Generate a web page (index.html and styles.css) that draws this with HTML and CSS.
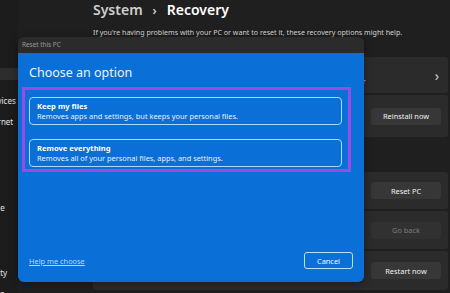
FILE: index.html
```html
<!DOCTYPE html>
<html lang="en">
<head>
    <meta charset="UTF-8">
    <meta name="viewport" content="width=device-width, initial-scale=1.0">
    <title>Recovery</title>
    <link rel="stylesheet" href="styles.css">
</head>
<body>
    <div class="window">
        <!-- 左側選單，只露出一小截 -->
        <aside class="sidebar">
            <ul class="nav">
                <li class="nav-item active">System</li>
                <li class="nav-item">Bluetooth &amp; devices</li>
                <li class="nav-item">Network &amp; internet</li>
                <li class="nav-item">Personalization</li>
                <li class="nav-item">Apps</li>
                <li class="nav-item">Accounts</li>
                <li class="nav-item">Time &amp; language</li>
                <li class="nav-item">Gaming</li>
                <li class="nav-item">Accessibility</li>
                <li class="nav-item">Privacy &amp; security</li>
                <li class="nav-item">Windows Update</li>
            </ul>
        </aside>

        <main class="content">
            <header class="crumb">
                <span class="crumb-parent">System</span>
                <span class="crumb-sep">&rsaquo;</span>
                <span class="crumb-current">Recovery</span>
            </header>
            <p class="intro">If you're having problems with your PC or want to reset it, these recovery options might help.</p>

            <div class="card card-fix">
                <div class="card-text">
                    <div class="card-title">Fix problems without resetting your PC</div>
                    <div class="card-desc">Resetting can take a while &mdash; first, try resolving issues by running a troubleshooter</div>
                </div>
                <span class="chevron">&rsaquo;</span>
            </div>
            <div class="card card-update">
                <div class="card-text">
                    <div class="card-title">Fix problems using Windows Update</div>
                </div>
                <button class="btn">Reinstall now</button>
            </div>

            <h3 class="section">Recovery options</h3>

            <div class="card card-reset">
                <div class="card-text">
                    <div class="card-title">Reset this PC</div>
                </div>
                <button class="btn">Reset PC</button>
            </div>
            <div class="card card-back">
                <div class="card-text">
                    <div class="card-title">Go back</div>
                </div>
                <button class="btn btn-disabled">Go back</button>
            </div>
            <div class="card card-startup">
                <div class="card-text">
                    <div class="card-title">Advanced startup</div>
                </div>
                <button class="btn">Restart now</button>
            </div>
        </main>

        <!-- 重設對話框 -->
        <div class="dialog">
            <div class="dialog-titlebar">Reset this PC</div>
            <div class="dialog-body">
                <h2 class="dialog-heading">Choose an option</h2>
                <div class="highlight">
                    <button class="option">
                        <span class="option-title">Keep my files</span>
                        <span class="option-desc">Removes apps and settings, but keeps your personal files.</span>
                    </button>
                    <button class="option">
                        <span class="option-title">Remove everything</span>
                        <span class="option-desc">Removes all of your personal files, apps, and settings.</span>
                    </button>
                </div>
                <div class="dialog-footer">
                    <a class="help-link" href="#">Help me choose</a>
                    <button class="btn-cancel">Cancel</button>
                </div>
            </div>
        </div>
    </div>
</body>
</html>
```

FILE: styles.css
```css
body {
    margin: 0;
    background-color: #1c1c1c;
    font-family: "Noto Sans", "Open Sans", sans-serif;
    color: #fff;
}

.window {
    position: relative;
    display: flex;
    width: 450px;
    height: 293px;
    overflow: hidden;
    background-color: #1f1f1f;
}

/* 左側選單 */
.sidebar {
    width: 18px;
    flex-shrink: 0;
    overflow: hidden;
    padding-top: 68px;
    background-color: #1c1c1c;
}

.nav {
    list-style: none;
    margin: 0 0 0 -63px;
    padding: 0;
    width: 160px;
}

.nav-item {
    height: 21.5px;
    line-height: 21.5px;
    font-size: 8px;
    color: #e2e2e2;
    white-space: nowrap;
    padding-left: 4px;
}

.nav-item.active {
    height: 12px;
    line-height: 12px;
    margin-bottom: 9.5px;
    background-color: #2d2d2d;
    color: transparent;
}

/* 主要內容 */
.content {
    flex: 1;
    min-width: 0;
    padding: 0 2px 0 75px;
    display: flex;
    flex-direction: column;
}

.crumb {
    display: flex;
    align-items: baseline;
    gap: 10px;
    height: 25px;
    font-size: 14px;
    font-weight: 600;
    white-space: nowrap;
}

.crumb-parent {
    color: #cfcfcf;
}

.crumb-sep {
    font-size: 12px;
    color: #cfcfcf;
}

.crumb-current {
    color: #fff;
}

.intro {
    margin: 2px 0 0;
    height: 30px;
    font-size: 7.1px;
    color: #d4d4d4;
    white-space: nowrap;
}

.card {
    display: flex;
    align-items: center;
    justify-content: space-between;
    background-color: #2b2b2b;
    border-radius: 3px;
    padding: 0 7px 0 12px;
    margin-bottom: 2px;
}

.card-fix { height: 36px; }
.card-update { height: 42px; }
.card-reset { height: 37px; }
.card-back { height: 38px; }
.card-startup { height: 39px; }

.card-text {
    min-width: 0;
    white-space: nowrap;
}

.card-title {
    font-size: 8px;
    color: #fff;
}

.card-desc {
    font-size: 6.75px;
    color: #cfcfcf;
    margin-top: 1px;
}

.chevron {
    font-size: 14px;
    color: #d0d0d0;
    margin-right: 2px;
}

.section {
    margin: 0;
    height: 33px;
    font-size: 8px;
    font-weight: 600;
}

.btn {
    flex-shrink: 0;
    width: 70px;
    height: 17px;
    padding: 0;
    border: none;
    border-radius: 3px;
    background-color: #373737;
    color: #f0f0f0;
    font-family: inherit;
    font-size: 7.4px;
}

.btn-disabled {
    background-color: #313131;
    color: #7c7c7c;
}

/* 對話框 */
.dialog {
    position: absolute;
    left: 18px;
    top: 37px;
    width: 346px;
    display: flex;
    flex-direction: column;
    border-radius: 6px;
    overflow: hidden;
    box-shadow: 0 2px 8px rgba(0, 0, 0, 0.35);
}

.dialog-titlebar {
    height: 16px;
    line-height: 16px;
    padding-left: 4px;
    background-color: #2b2b2b;
    font-size: 6.4px;
    color: #9a9a9a;
}

.dialog-body {
    height: 229px;
    background-color: #0a6fd6;
    display: flex;
    flex-direction: column;
}

.dialog-heading {
    margin: 0;
    padding: 11px 0 0 11px;
    height: 23px;
    font-size: 12.5px;
    font-weight: 400;
    color: #eaf3ff;
}

.highlight {
    margin: 0 13px 0 4px;
    height: 85px;
    box-sizing: border-box;
    border: 3px solid #9b4be4;
    padding: 7px 6px 0 4px;
    display: flex;
    flex-direction: column;
    gap: 14px;
}

.option {
    display: flex;
    flex-direction: column;
    align-items: flex-start;
    justify-content: center;
    height: 28px;
    padding: 0 7px;
    border: 1.5px solid #a9dcff;
    border-radius: 4px;
    background-color: #0a6fd6;
    font-family: inherit;
    text-align: left;
}

.option-title {
    font-size: 7.6px;
    font-weight: 700;
    color: #fff;
    line-height: 10px;
}

.option-desc {
    font-size: 7.4px;
    color: #e4efff;
    line-height: 11px;
}

.dialog-footer {
    margin-top: auto;
    display: flex;
    justify-content: space-between;
    align-items: center;
    padding: 0 11px 13px;
}

.help-link {
    font-size: 7.4px;
    color: #b3dbff;
    text-decoration: underline;
}

.btn-cancel {
    width: 49px;
    height: 17px;
    padding: 0;
    border: 1.5px solid #b8e0ff;
    border-radius: 3px;
    background-color: #0a6fd6;
    color: #f0f7ff;
    font-family: inherit;
    font-size: 7.4px;
}
```
